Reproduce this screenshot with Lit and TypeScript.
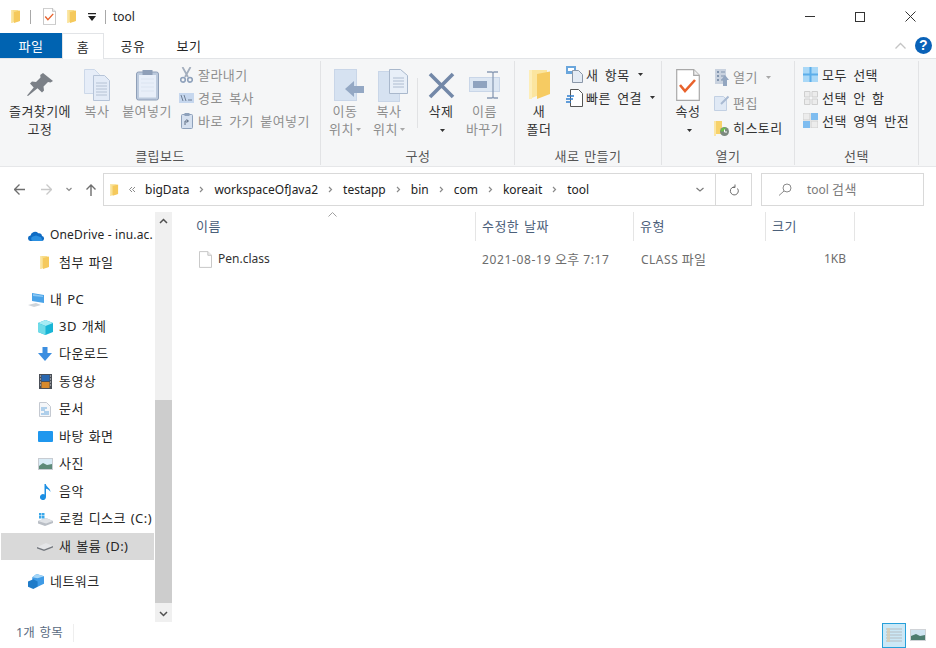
import {LitElement, css, html, svg} from "lit";
import {customElement} from "lit/decorators.js";

const ic = (w: number, h: number, body: unknown) => html`<svg width=${w} height=${h} viewBox="0 0 ${w} ${h}">${body}</svg>`;

const folderNarrow = (w = 10, h = 15) => html`<svg width=${w} height=${h} viewBox="0 0 10 15">
    <path d="M0 1h7l1 1v10l-2 .5L0 14z" fill="#f8dd8a"/>
    <path d="M3 3l6-1.500v10.500L3 14z" fill="#f5c95c"/>
    <path d="M0 1h1.600v13H0z" fill="#fbe7a8"/>
</svg>`;

const pageIcon = (w: number, h: number) => html`<svg width=${w} height=${h} viewBox="0 0 14 18">
    <path d="M.5.5h9l4 4v13H.5z" fill="#fff" stroke="#c2c2c2"/><path d="M9.500.5v4h4" fill="#ececec" stroke="#c2c2c2"/>
</svg>`;

const checkDoc = (w: number, h: number) => html`<svg width=${w} height=${h} viewBox="0 0 24 32">
    <path d="M.7.7h17l5.600 5.600v25H.7z" fill="#fff" stroke="#a9a9a9" stroke-width="1.200"/>
    <path d="M17.700.7v5.600h5.600" fill="#eee" stroke="#a9a9a9" stroke-width="1.200"/>
    <path d="M4 16l5 6 10-11" fill="none" stroke="#e8622c" stroke-width="2.600"/>
</svg>`;

const icons: Record<string, unknown> = {
    pin: html`<svg width="26" height="24" viewBox="0 0 26 24"><path d="M16 0l10 8-2.500 1.500-2.500-.5-4.500 4.500.5 4-2 2-4.500-4.200L1 23l-1-.5 6.700-8L3 10.500l2-2 4 .5 4.500-4.500-.3-2.500z" fill="#7b8087"/></svg>`,
    copy: html`<svg width="27" height="32" viewBox="0 0 27 32"><path d="M.5.5h10l5 5v19H.5z" fill="#e6edf8" stroke="#ccd8e9"/><g transform="translate(9 6)"><path d="M.5.5h11l5 5v20H.5z" fill="#e3ebf7" stroke="#b6c4d8"/><path d="M3 8h11M3 11h11M3 14h11M3 17h11M3 20h11" stroke="#b5c2d4"/></g></svg>`,
    paste: html`<svg width="23" height="32" viewBox="0 0 23 32"><rect x=".5" y="3" width="22" height="28" rx="2" fill="#bccadd" stroke="#8e9fb8"/><rect x="3" y="6" width="17" height="22.500" fill="#e8eff9"/><path d="M5 10h13M5 14h13M5 18h13M5 22h13" stroke="#dbe4f0"/><rect x="6.500" y="1" width="10" height="5" fill="#8e9fb8"/></svg>`,
    cut: html`<svg width="13" height="16" viewBox="0 0 13 16"><path d="M2.500 0l5.500 10M10.500 0L5 10" stroke="#a3aebd" stroke-width="1.800"/><circle cx="3" cy="12.800" r="2.300" fill="none" stroke="#8ea1bb" stroke-width="1.600"/><circle cx="10" cy="12.800" r="2.300" fill="none" stroke="#8ea1bb" stroke-width="1.600"/></svg>`,
    pathCopy: html`<svg width="15" height="10" viewBox="0 0 15 10"><rect width="15" height="10" fill="#c6d7ee"/><path d="M2 2l2 6M5 2l2 6M9 7h4" stroke="#6f7f95" fill="none"/></svg>`,
    shortcutPaste: html`<svg width="12" height="16" viewBox="0 0 12 16"><rect x=".5" y="1.500" width="11" height="14" rx="1" fill="#d5e0ef" stroke="#8ea1bb"/><rect x="3.500" y="0" width="5" height="3" fill="#8ea1bb"/><path d="M4 12V8h3M5.500 6.500L7.500 8l-2 1.500" fill="none" stroke="#5d6c82"/></svg>`,
    move: html`<svg width="30" height="32" viewBox="0 0 30 32"><rect x=".5" y=".5" width="22" height="31" fill="#d6e2f1" stroke="#c9d6e8"/><path d="M11 20l9-8v5h10v7H20v4z" fill="#94a8c4"/></svg>`,
    copyTo: html`<svg width="30" height="33" viewBox="0 0 30 33"><rect x=".5" y="2.500" width="21" height="30" fill="#d6e2f1" stroke="#c9d6e8"/><path d="M11.500.5h11l7 6v18h-18z" fill="#e8eff8" stroke="#a9b8cc"/><path d="M15 9h11M15 12h11M15 15h11M15 18h11" stroke="#aebcd0"/></svg>`,
    del: html`<svg width="27" height="27" viewBox="0 0 27 27"><path d="M2 2l23 23M25 2L2 25" stroke="#7388a8" stroke-width="3.600"/></svg>`,
    rename: html`<svg width="31" height="28" viewBox="0 0 31 28"><rect x=".5" y="6.500" width="30" height="14" fill="#dde7f3" stroke="#c9d6e8"/><rect x="4" y="10" width="14" height="7" fill="#8fa3bf"/><path d="M18 1h5l1 1 1-1h4M24 2v24M18 27h5l1-1 1 1h4" fill="none" stroke="#8b9cb5" stroke-width="1.300"/></svg>`,
    newFolder: html`<svg width="21" height="31" viewBox="0 0 21 31"><path d="M0 0h18v23l-5 1L0 29z" fill="#fbe59f"/><path d="M8 4l13-2.500v22.500L8 29z" fill="#f6cb62"/><path d="M0 0h3v29H0z" fill="#fdeeb9"/></svg>`,
    newItem: html`<svg width="17" height="17" viewBox="0 0 17 17"><rect x="0" y="0" width="10" height="8" fill="#6aa6dc"/><rect x="2" y="2" width="6" height="3" fill="#fff"/><path d="M6.500 4.500h6l4 4v8h-10z" fill="#e4ebf4" stroke="#8a97a8"/></svg>`,
    quickLink: html`<svg width="17" height="18" viewBox="0 0 17 18"><path d="M4.500.5h8l4 4v13h-12z" fill="#fff" stroke="#555"/><path d="M1 7h7M0 10h7M0 13h5" stroke="#2f7fd0" stroke-width="1.400"/></svg>`,
    open: html`<svg width="14" height="17" viewBox="0 0 14 17"><rect width="11" height="15" fill="#c9d2df"/><path d="M2 2h2v2H2zM2 6h2v2H2zM2 10h2v2H2z" fill="#8295ae"/><path d="M6 3h4M6 7h4M6 11h4" stroke="#8295ae"/><path d="M10 6l4 5h-2v6H8v-6H6z" fill="#93a6c0"/></svg>`,
    edit: html`<svg width="15" height="16" viewBox="0 0 15 16"><path d="M.5 1.500h9l3 3v11H.5z" fill="#e0e9f5" stroke="#c2d0e3"/><path d="M7 9l7.500-7.500" stroke="#a9bad2" stroke-width="2"/></svg>`,
    history: html`<svg width="15" height="15" viewBox="0 0 15 15"><path d="M0 0h8v13H0z" fill="#f7d26b"/><path d="M0 0h2v15H0z" fill="#fbe6a6"/><circle cx="10.500" cy="10.500" r="4.500" fill="#7d8a80"/><path d="M6.500 10.500a4 4 0 0 1 6-3.500L9 10.500z" fill="#6cbf4b"/><path d="M10.500 8.500V11H13" stroke="#fff" fill="none"/></svg>`,
    selAll: html`<svg width="15" height="15" viewBox="0 0 15 15"><rect width="15" height="15" fill="#a9d8f7"/><path d="M7.500 0v15M0 7.500h15" stroke="#5caeea" stroke-width="2"/></svg>`,
    selNone: html`<svg width="14" height="14" viewBox="0 0 14 14"><path d="M.5.500h5.500v5.500H.5zM8 .5h5.500v5.500H8zM.5 8H6v5.500H.5zM8 8h5.500v5.500H8z" fill="#ececec" stroke="#cfcfcf"/></svg>`,
    selInvert: html`<svg width="15" height="15" viewBox="0 0 15 15"><rect width="7" height="7" fill="#ececec" stroke="#cfcfcf"/><rect x="8" width="7" height="7" fill="#7fbdf0"/><rect y="8" width="7" height="7" fill="#7fbdf0"/><rect x="8" y="8" width="7" height="7" fill="#ececec" stroke="#cfcfcf"/></svg>`,
    onedrive: html`<svg width="17" height="11" viewBox="0 0 18 12"><path d="M3 12a3 3 0 0 1-.5-6A5 5 0 0 1 11 3.500 3.500 3.500 0 0 1 15 6.500 2.800 2.800 0 0 1 15 12z" fill="#0f6cc4"/><path d="M5 12a2.600 2.600 0 0 1 0-5l3.500-1 5.500 2 1.500 4z" fill="#2a8fe0"/></svg>`,
    pc: html`<svg width="16" height="14" viewBox="0 0 16 14"><path d="M4 0l12 2v8L4 8z" fill="#4aa3e8"/><path d="M5 1l10 1.700V4L5 3z" fill="#8bc8f4"/><path d="M0 12l8-2 5 2-7 2z" fill="#cfd4d9"/></svg>`,
    cube: html`<svg width="15" height="15" viewBox="0 0 15 15"><path d="M7.500 0L15 3v9l-7.500 3L0 12V3z" fill="#19b5d6"/><path d="M7.500 0L15 3l-7.500 3L0 3z" fill="#a6ecf4"/><path d="M0 3l7.500 3v9L0 12z" fill="#6fdbe8"/></svg>`,
    download: html`<svg width="14" height="14" viewBox="0 0 14 14"><path d="M4.500 0h5v6H14l-7 8-7-8h4.500z" fill="#3b8ee0"/></svg>`,
    video: html`<svg width="13" height="15" viewBox="0 0 13 15"><rect width="13" height="15" fill="#4a4f57"/><rect x="2.500" y="1" width="8" height="6" fill="#2967b0"/><rect x="2.500" y="8" width="8" height="6" fill="#d88a2c"/><path d="M1 2h1M1 5h1M1 8h1M1 11h1M11 2h1M11 5h1M11 8h1M11 11h1" stroke="#ddd"/></svg>`,
    docs: html`<svg width="12" height="15" viewBox="0 0 12 15"><path d="M.5.500h7l4 4v10H.5z" fill="#f4f6f9" stroke="#c4c9d1"/><path d="M2 6h6M2 8h4M5 10h5M2 12h8" stroke="#6aa8dc"/></svg>`,
    desktop: html`<svg width="15" height="11" viewBox="0 0 15 11"><rect width="15" height="11" rx="1" fill="#1f97ee"/></svg>`,
    photo: html`<svg width="15" height="12" viewBox="0 0 15 12"><rect width="15" height="12" fill="#c8ccd2"/><rect x="1" y="1" width="13" height="10" fill="#d9ecf7"/><path d="M1 8l4-3 4 2 5-1v5H1z" fill="#5d8a78"/></svg>`,
    music: html`<svg width="11" height="16" viewBox="0 0 11 16"><path d="M4.500 0h1.300c.3 3 4.700 4 4.700 8-1-2-3-3-4.500-3.300V13a3 3 0 1 1-1.500-2.500z" fill="#1c8fe3"/></svg>`,
    diskC: html`<svg width="16" height="14" viewBox="0 0 16 14"><path d="M1 9l8-3 7 3v2l-8 3-7-2.500z" fill="#b9bec5"/><path d="M1 9l8 2.500 7-2.500-7-3z" fill="#e0e3e7"/><path d="M2 1h2.500v2.500H2zM5 1h2.500v2.500H5zM2 4h2.500v2.500H2zM5 4h2.500v2.500H5z" fill="#3aa8ea"/></svg>`,
    diskD: html`<svg width="16" height="8" viewBox="0 0 16 8"><path d="M0 4l9-4 7 3v1.500L7 8 0 5.500z" fill="#e4e5e7"/><path d="M0 5.500L7 8l9-3.500V3L7 6.500 0 4z" fill="#74787e"/></svg>`,
    network: html`<svg width="16" height="15" viewBox="0 0 15 14"><path d="M8 0l7 2v7l-6 3-5-3V3z" fill="#3f9be6"/><path d="M0 7l5-2 4 2v5l-4 2-5-2z" fill="#1f7bc8"/><path d="M8 0l7 2-6 2-5-1z" fill="#a5d6f7"/></svg>`,
    largeThumb: html`<svg width="16" height="12" viewBox="0 0 16 12"><rect width="16" height="12" fill="#d0d3d7"/><rect x="1" y="1" width="14" height="10" fill="#cfe4f1"/><path d="M1 7l5-2 4 2 5-1v5H1z" fill="#4d7d70"/></svg>`,
    details: html`<svg width="16" height="14" viewBox="0 0 16 14"><path d="M0 1h16M0 4h16M0 7h16M0 10h16M0 13h16" stroke="#b4bcc2"/><path d="M1 0h3v14H1z" fill="#d8cdb5" opacity=".8"/></svg>`,
};

const navGroups = [
    [
        {label: "OneDrive - inu.ac.", icon: "onedrive", top: true, lat: true},
        {label: "첨부 파일", icon: "folder"},
    ],
    [
        {label: "내 PC", icon: "pc", top: true},
        {label: "3D 개체", icon: "cube"},
        {label: "다운로드", icon: "download"},
        {label: "동영상", icon: "video"},
        {label: "문서", icon: "docs"},
        {label: "바탕 화면", icon: "desktop"},
        {label: "사진", icon: "photo"},
        {label: "음악", icon: "music"},
        {label: "로컬 디스크 (C:)", icon: "diskC"},
        {label: "새 볼륨 (D:)", icon: "diskD", selected: true},
    ],
    [{label: "네트워크", icon: "network", top: true}],
];

const crumbs = ["bigData", "workspaceOfJava2", "testapp", "bin", "com", "koreait", "tool"];
const caret = html`<svg class="caret" width="5" height="3" viewBox="0 0 5 3"><path d="M0 0h5L2.500 3z"/></svg>`;
const chev = html`<svg width="5" height="7" viewBox="0 0 5 7"><path d="M1 1l2.500 2.500L1 6" fill="none" stroke="#8a8a8a" stroke-width="1.200"/></svg>`;

@customElement("app-root")
export class AppRoot extends LitElement {
    static styles = css`
        :host {
            display: flex;
            flex-direction: column;
            width: 936px;
            height: 648px;
            overflow: hidden;
            background: #fff;
            color: #262626;
            font: 13px/18px "Noto Sans", "Noto Sans CJK KR", sans-serif;
            letter-spacing: .45px;
            word-spacing: 1px;
        }
        svg { display: block; flex: none; }
        .lat { font-size: 12px; letter-spacing: 0; word-spacing: 0; }

        .titlebar { display: flex; align-items: center; height: 33px; padding-left: 11px; flex: none; }
        .qa { display: flex; align-items: center; }
        .qa-sep { width: 1px; height: 14px; background: #a8a8a8; margin-left: 9px; }
        .qa-item { margin-left: 11px; }
        .qa-item.first { margin-left: 12px; }
        .title { margin-left: 7px; }
        .win { margin-left: auto; margin-right: 1px; display: flex; }
        .win div { width: 50px; height: 33px; display: flex; align-items: center; justify-content: center; }

        .tabs { display: flex; height: 26px; flex: none; border-bottom: 1px solid #e2e4e7; box-sizing: border-box; }
        .tab { display: flex; align-items: center; justify-content: center; height: 25px; }
        .tab.file { width: 62px; background: #0063b1; color: #fff; }
        .tab.home { width: 42px; box-sizing: border-box; margin-left: 0; background: #fff; border: 1px solid #e2e4e7; border-bottom: 0; height: 26px; }
        .tab.share { width: 58px; }
        .tab.view { width: 54px; }
        .tab-end { margin-left: auto; display: flex; align-items: center; gap: 9px; padding-right: 4px; }
        .help { width: 17px; height: 17px; border-radius: 50%; background: #0a62b8; color: #fff; font: bold 14px/17px "Liberation Sans", sans-serif; text-align: center; }

        .ribbon { display: flex; height: 108px; flex: none; box-sizing: border-box; background: #f5f6f7; border-bottom: 1px solid #e6e7e9; color: #333; }
        .group { display: flex; flex-direction: column; box-sizing: border-box; height: 104px; margin-top: 2px; border-right: 1px solid #e2e3e5; }
        .g1 { width: 321px; }
        .g2 { width: 194px; padding-left: 1px; }
        .g3 { width: 147px; }
        .g4 { width: 133px; }
        .g5 { width: 124px; }
        .gbody { height: 86px; flex: none; display: flex; }
        .glabel { height: 18px; text-align: center; color: #555; }
        .big { display: flex; flex-direction: column; align-items: center; text-align: center; line-height: 17.500px; flex: none; white-space: nowrap; }
        .big .ico { height: 38px; margin-top: 5px; margin-bottom: -1px; display: flex; align-items: center; justify-content: center; }
        .shift .ico { padding-left: 7px; }
        .muted { color: #8e8e8e; }
        .caret { fill: #333; display: inline-block; vertical-align: middle; margin-left: 2px; }
        .muted .caret { fill: #a8a8a8; }
        .w80 { width: 80px; }
        .w34 { width: 34px; }
        .w66 { width: 66px; }
        .w46 { width: 46px; }
        .w42 { width: 42px; }
        .w41 { width: 41px; }
        .w48 { width: 48px; }
        .w52 { width: 52px; }
        .small-col { display: flex; flex-direction: column; gap: 5px; padding-top: 4.500px; word-spacing: 2.500px; }
        .small-col.wide { gap: 7.500px; padding-top: 7px; }
        .small-col.m3 { margin-left: 3px; }
        .small-col.m8 { margin-left: 8px; }
        .small { display: flex; align-items: center; height: 18px; white-space: nowrap; }
        .si { display: flex; justify-content: center; flex: none; margin-right: 4px; }
        .si.s12 { width: 13px; margin-right: 5px; }
        .si.s15 { width: 15px; }
        .si.s17 { width: 17px; margin-right: 3px; }
        .vsep { width: 1px; height: 50px; margin: 17px 0 0 7px; background: #e1e2e4; flex: none; }

        .addr { display: flex; align-items: center; height: 45px; flex: none; }
        .nav-btns { display: flex; align-items: center; width: 103px; padding-left: 14px; box-sizing: border-box; flex: none; }
        .fw { margin-left: 16px; }
        .dd { margin-left: 14px; }
        .up { margin-left: 14px; }
        .addrbox { display: flex; align-items: center; width: 649px; height: 33px; box-sizing: border-box; border: 1px solid #d9d9d9; padding-left: 6px; color: #222; flex: none; }
        .crumb { white-space: nowrap; }
        .sep { width: 25px; display: flex; justify-content: center; flex: none; }
        .sep.first { width: 26px; }
        .addr-end { margin-left: auto; display: flex; align-items: center; height: 100%; }
        .addr-dd { width: 30px; display: flex; justify-content: center; }
        .addr-ref { width: 35px; height: 100%; border-left: 1px solid #d9d9d9; display: flex; align-items: center; justify-content: center; }
        .search { display: flex; align-items: center; width: 163px; height: 33px; margin-left: 9px; box-sizing: border-box; border: 1px solid #d9d9d9; padding-left: 15px; gap: 15px; color: #7b7b7b; flex: none; }
        .search .ko { font-size: 13px; letter-spacing: .45px; }

        .main { display: flex; flex: 1; min-height: 0; }
        .sidebar { width: 155px; flex: none; padding-top: 9.500px; box-sizing: border-box; overflow: hidden; }
        .navgroup { margin-bottom: 9.500px; }
        .navgroup:nth-child(2) { margin-bottom: 8px; }
        .navrow { display: flex; align-items: center; height: 27.450px; margin-left: 1px; margin-right: 1px; padding-left: 36px; gap: 6px; white-space: nowrap; overflow: hidden; }
        .navrow.top { padding-left: 27px; }
        .navrow.sel { background: #d9d9d9; }
        .navico { width: 16px; display: flex; justify-content: center; flex: none; }
        .navlabel { margin-bottom: 2px; }
        .navlabel.lat { margin-bottom: 0; letter-spacing: .15px; }
        .scroll { width: 17px; flex: none; display: flex; flex-direction: column; background: #f0f0f0; height: 410px; }
        .sarrow { height: 17px; display: flex; align-items: center; justify-content: center; flex: none; }
        .strack { flex: 1; display: flex; flex-direction: column; justify-content: flex-end; padding-bottom: 2px; }
        .thumb { height: 203px; background: #cdcdcd; }

        .list { flex: 1; display: flex; flex-direction: column; min-width: 0; position: relative; }
        .sort { position: absolute; left: 156px; top: 0; }
        .hdr { display: flex; height: 29px; color: #4c607a; flex: none; }
        .hdr .col { padding-bottom: 1px; }
        .col { box-sizing: border-box; border-right: 1px solid #e5e5e5; padding-left: 6px; display: flex; align-items: center; height: 29px; }
        .c1 { width: 304px; padding-left: 24px; }
        .c2 { width: 158px; }
        .c3 { width: 132px; }
        .c4 { width: 89px; }
        .row { display: flex; height: 24px; align-items: center; color: #6d6d6d; margin-top: 6px; }
        .cell { box-sizing: border-box; padding-left: 7px; white-space: nowrap; }
        .cell .ko { font-size: 13px; letter-spacing: .3px; }
        .cell.c1 { display: flex; gap: 6px; padding-left: 27px; color: #333; align-items: center; }
        .cell.c2 { padding-left: 6px; letter-spacing: .65px; }
        .cell.c3 { letter-spacing: .5px; }
        .cell.c4 { text-align: right; padding-right: 9px; padding-left: 0; }

        .status { display: flex; align-items: center; height: 26px; flex: none; color: #5a6b82; }
        .status-text { width: 74px; box-sizing: border-box; padding-left: 16px; border-right: 1px solid #eee; height: 18px; margin-bottom: 4px; font-size: 12.500px; letter-spacing: .2px; }
        .views { margin-left: auto; display: flex; align-items: center; margin-right: 10px; gap: 4px; }
        .vbtn { width: 24px; height: 25px; box-sizing: border-box; background: #cbe8f6; border: 1px solid #26a0da; display: flex; align-items: center; justify-content: center; }
    `;

    private big(icon: unknown, lines: unknown[], cls: string, muted = false) {
        return html`<div class="big ${cls} ${muted ? "muted" : ""}">
            <div class="ico">${icon}</div>
            ${lines.map((l) => html`<div>${l}</div>`)}
        </div>`;
    }

    private small(icon: string, label: unknown, size: string, muted = false) {
        return html`<div class="small ${muted ? "muted" : ""}"><span class="si ${size}">${icons[icon]}</span>${label}</div>`;
    }

    private renderRibbon() {
        return html`<div class="ribbon">
            <div class="group g1">
                <div class="gbody">
                    ${this.big(icons.pin, ["즐겨찾기에", "고정"], "w80")}
                    ${this.big(icons.copy, ["복사"], "w34", true)}
                    ${this.big(icons.paste, ["붙여넣기"], "w66", true)}
                    <div class="small-col">
                        ${this.small("cut", "잘라내기", "s12", true)}
                        ${this.small("pathCopy", "경로 복사", "s12", true)}
                        ${this.small("shortcutPaste", "바로 가기 붙여넣기", "s12", true)}
                    </div>
                </div>
                <div class="glabel">클립보드</div>
            </div>
            <div class="group g2">
                <div class="gbody">
                    ${this.big(icons.move, ["이동", html`<span class="small">위치 ${caret}</span>`], "w46 shift", true)}
                    ${this.big(icons.copyTo, ["복사", html`<span class="small">위치 ${caret}</span>`], "w42 shift", true)}
                    <div class="vsep"></div>
                    ${this.big(icons.del, ["삭제", caret], "w46")}
                    ${this.big(icons.rename, ["이름", "바꾸기"], "w41", true)}
                </div>
                <div class="glabel">구성</div>
            </div>
            <div class="group g3">
                <div class="gbody">
                    ${this.big(icons.newFolder, ["새", "폴더"], "w48")}
                    <div class="small-col m3">
                        ${this.small("newItem", html`새 항목&nbsp;${caret}`, "s17")}
                        ${this.small("quickLink", html`빠른 연결&nbsp;${caret}`, "s17")}
                    </div>
                </div>
                <div class="glabel">새로 만들기</div>
            </div>
            <div class="group g4">
                <div class="gbody">
                    ${this.big(checkDoc(24, 32), ["속성", caret], "w52")}
                    <div class="small-col wide">
                        ${this.small("open", html`열기&nbsp;${caret}`, "s15", true)}
                        ${this.small("edit", "편집", "s15", true)}
                        ${this.small("history", "히스토리", "s15")}
                    </div>
                </div>
                <div class="glabel">열기</div>
            </div>
            <div class="group g5">
                <div class="gbody">
                    <div class="small-col m8">
                        ${this.small("selAll", "모두 선택", "s15")}
                        ${this.small("selNone", "선택 안 함", "s15")}
                        ${this.small("selInvert", "선택 영역 반전", "s15")}
                    </div>
                </div>
                <div class="glabel">선택</div>
            </div>
        </div>`;
    }

    private renderSidebar() {
        return html`<div class="sidebar">
            ${navGroups.map((group) => html`<div class="navgroup">
                ${group.map((item: any) => html`<div class="navrow ${item.top ? "top" : ""} ${item.selected ? "sel" : ""}">
                    <span class="navico">${item.icon === "folder" ? folderNarrow(10, 15) : icons[item.icon]}</span>
                    <span class="navlabel ${item.lat ? "lat" : ""}">${item.label}</span>
                </div>`)}
            </div>`)}
        </div>
        <div class="scroll">
            <div class="sarrow">${ic(9, 6, svg`<path d="M1 5l3.500-3.500L8 5" fill="none" stroke="#505050" stroke-width="1.500"/>`)}</div>
            <div class="strack"><div class="thumb"></div></div>
            <div class="sarrow">${ic(9, 6, svg`<path d="M1 1l3.500 3.500L8 1" fill="none" stroke="#505050" stroke-width="1.500"/>`)}</div>
        </div>`;
    }

    protected render() {
        return html`
            <div class="titlebar">
                <div class="qa">
                    ${folderNarrow(10, 15)}
                    <div class="qa-sep"></div>
                    <div class="qa-item first">${checkDoc(13, 17)}</div>
                    <div class="qa-item">${folderNarrow(10, 15)}</div>
                    <div class="qa-item">${ic(8, 8, svg`<path d="M0 0h8v1.200H0zM0 3h8L4 8z" fill="#222"/>`)}</div>
                    <div class="qa-sep"></div>
                </div>
                <div class="title lat">tool</div>
                <div class="win">
                    <div>${ic(10, 1, svg`<path d="M0 .5h10" stroke="#333"/>`)}</div>
                    <div>${ic(10, 10, svg`<rect x=".5" y=".5" width="9" height="9" fill="none" stroke="#333"/>`)}</div>
                    <div>${ic(11, 11, svg`<path d="M.5.500l10 10M10.500.5l-10 10" stroke="#333"/>`)}</div>
                </div>
            </div>
            <div class="tabs">
                <div class="tab file">파일</div>
                <div class="tab home">홈</div>
                <div class="tab share">공유</div>
                <div class="tab view">보기</div>
                <div class="tab-end">
                    ${ic(11, 7, svg`<path d="M.5 6.500l5-5 5 5" fill="none" stroke="#c4c4c4" stroke-width="1.300"/>`)}
                    <div class="help">?</div>
                </div>
            </div>
            ${this.renderRibbon()}
            <div class="addr">
                <div class="nav-btns">
                    ${ic(11, 11, svg`<path d="M5.500.5l-5 5 5 5M.5 5.500h10.500" fill="none" stroke="#6e6e6e" stroke-width="1.300"/>`)}
                    <div class="fw">${ic(11, 11, svg`<path d="M5.500.5l5 5-5 5M10.500 5.500H0" fill="none" stroke="#c9c9c9" stroke-width="1.300"/>`)}</div>
                    <div class="dd">${ic(6, 5, svg`<path d="M.5 1l2.500 2.500L5.500 1" fill="none" stroke="#8a8a8a" stroke-width="1.200"/>`)}</div>
                    <div class="up">${ic(10, 12, svg`<path d="M.5 5.500L5 1l4.500 4.500M5 1v11" fill="none" stroke="#6e6e6e" stroke-width="1.400"/>`)}</div>
                </div>
                <div class="addrbox lat">
                    ${folderNarrow(9, 14)}
                    <div class="sep first">${ic(8, 7, svg`<path d="M4 1L1.500 3.500 4 6M7 1L4.500 3.500 7 6" fill="none" stroke="#8a8a8a"/>`)}</div>
                    ${crumbs.map((c, i) => html`${i ? html`<div class="sep">${chev}</div>` : ""}<div class="crumb">${c}</div>`)}
                    <div class="addr-end">
                        <div class="addr-dd">${ic(8, 5, svg`<path d="M.5 1l3.500 3L7.500 1" fill="none" stroke="#7a7a7a" stroke-width="1.200"/>`)}</div>
                        <div class="addr-ref">${ic(10, 12, svg`<path d="M8.500 4.500a4 4 0 1 1-2.500-1.500M6 .5V3.500H3" fill="none" stroke="#6e6e6e"/>`)}</div>
                    </div>
                </div>
                <div class="search lat">
                    ${ic(15, 13, svg`<circle cx="10" cy="5" r="4" fill="none" stroke="#8a8a8a"/><path d="M7 8l-5 4.500" stroke="#8a8a8a"/>`)}
                    <span>tool <span class="ko">검색</span></span>
                </div>
            </div>
            <div class="main">
                ${this.renderSidebar()}
                <div class="list">
                    <div class="sort">${ic(9, 5, svg`<path d="M.5 4.500l4-4 4 4" fill="none" stroke="#a0a0a0"/>`)}</div>
                    <div class="hdr">
                        <div class="col c1">이름</div>
                        <div class="col c2">수정한 날짜</div>
                        <div class="col c3">유형</div>
                        <div class="col c4">크기</div>
                    </div>
                    <div class="row lat">
                        <div class="cell c1">${pageIcon(13, 17)}Pen.class</div>
                        <div class="cell c2">2021-08-19 <span class="ko">오후</span> 7:17</div>
                        <div class="cell c3">CLASS <span class="ko">파일</span></div>
                        <div class="cell c4">1KB</div>
                    </div>
                </div>
            </div>
            <div class="status">
                <div class="status-text">1개 항목</div>
                <div class="views">
                    <div class="vbtn">${icons.details}</div>
                    ${icons.largeThumb}
                </div>
            </div>
        `;
    }
}
